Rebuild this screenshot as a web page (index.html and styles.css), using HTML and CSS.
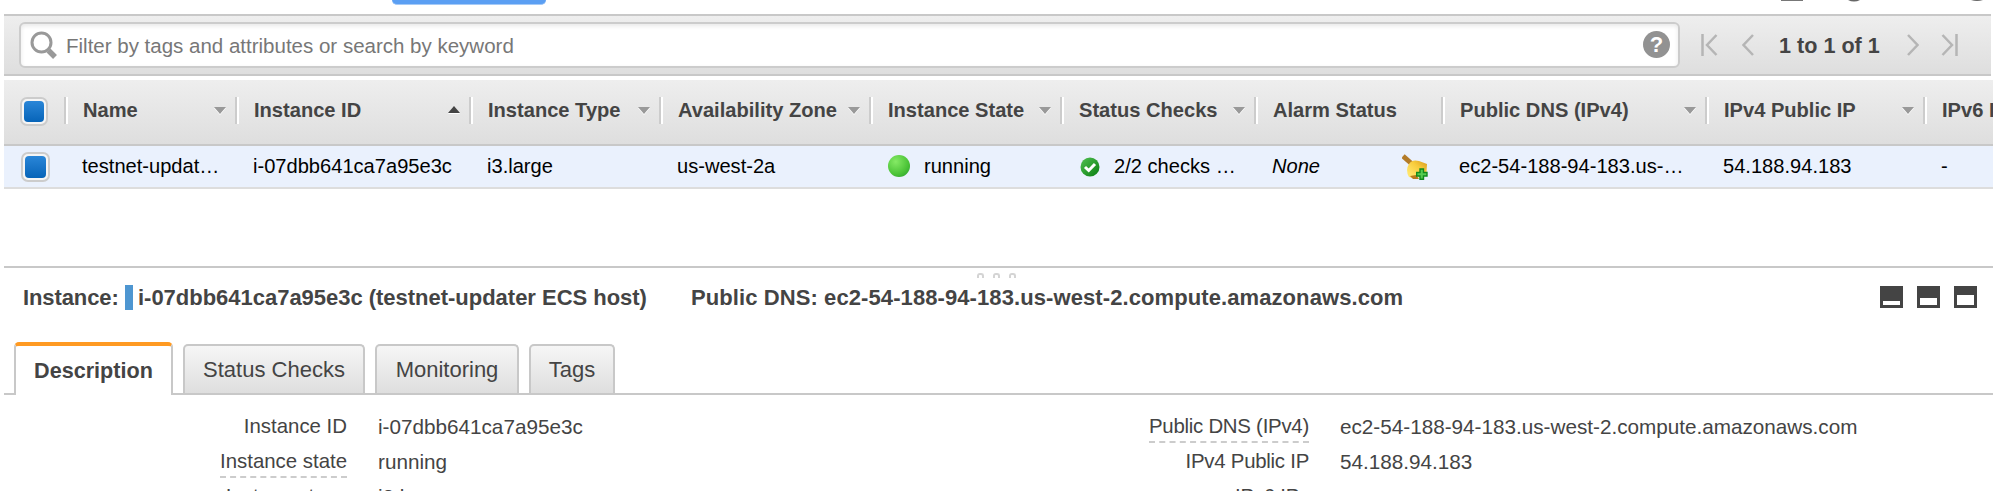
FILE: index.html
```html
<!DOCTYPE html>
<html lang="en">
<head>
<meta charset="utf-8">
<title>Instances</title>
<link rel="stylesheet" href="styles.css">
</head>
<body>
<div class="page">
  <header class="actions">
    <div class="action-button"></div>
    <svg class="action-icons" width="220" height="6" viewBox="0 0 220 6"><path d="M2 0H24V1H2Z" fill="#777"/><path d="M69 0Q75 3 81 0Z" fill="#666"/><path d="M192 0Q198 2 204 0Z" fill="#666"/></svg>
  </header>
  <div class="toolbar">
    <div class="search">
      <svg class="lens" width="28" height="30" viewBox="0 0 28 30"><circle cx="11.5" cy="11.5" r="9.5" fill="none" stroke="#999" stroke-width="3"/><path d="M18.5 19.5L25 26" stroke="#999" stroke-width="5.5"/></svg>
      <span class="placeholder">Filter by tags and attributes or search by keyword</span>
      <span class="help">?</span>
    </div>
    <div class="pager">
      <svg width="17" height="22" viewBox="0 0 17 22"><path d="M1.5 0V22M15.5 1L6 11L15.5 21"/></svg>
      <svg width="12" height="22" viewBox="0 0 12 22"><path d="M11 1L1.5 11L11 21"/></svg>
      <span class="pages">1 to 1 of 1</span>
      <svg width="12" height="22" viewBox="0 0 12 22"><path d="M1 1L10.5 11L1 21"/></svg>
      <svg width="17" height="22" viewBox="0 0 17 22"><path d="M15.5 0V22M1.500 1L11 11L1.500 21"/></svg>
    </div>
  </div>
  <div class="grid head">
    <div class="check-cell"><span class="check"></span></div>
    <div class="th">Name<i class="down"></i></div>
    <div class="th">Instance ID<i class="up"></i></div>
    <div class="th">Instance Type<i class="down"></i></div>
    <div class="th">Availability Zone<i class="down"></i></div>
    <div class="th">Instance State<i class="down"></i></div>
    <div class="th">Status Checks<i class="down"></i></div>
    <div class="th">Alarm Status</div>
    <div class="th">Public DNS (IPv4)<i class="down"></i></div>
    <div class="th">IPv4 Public IP<i class="down"></i></div>
    <div class="th">IPv6 IPs</div>
  </div>
  <div class="grid row">
    <div class="check-cell"><span class="check"></span></div>
    <div class="td">testnet-updat…</div>
    <div class="td">i-07dbb641ca7a95e3c</div>
    <div class="td">i3.large</div>
    <div class="td">us-west-2a</div>
    <div class="td"><span class="dot"></span>running</div>
    <div class="td"><svg class="ok" width="20" height="20" viewBox="0 0 20 20"><defs><linearGradient id="g" x1="0" y1="0" x2="1" y2="1"><stop offset="0" stop-color="#52c152"/><stop offset="1" stop-color="#087d10"/></linearGradient></defs><circle cx="10" cy="10" r="9.5" fill="url(#g)"/><path d="M5 10L8.7 13.5L15 7" fill="none" stroke="#fff" stroke-width="3"/></svg>2/2 checks …</div>
    <div class="td none">None<svg class="bell" width="26" height="26" viewBox="0 0 26 26"><defs><linearGradient id="b" x1="0" y1="1" x2="1" y2="0"><stop offset="0.2" stop-color="#ffe56a"/><stop offset="0.6" stop-color="#f8cc3c"/><stop offset="1" stop-color="#d89a20"/></linearGradient></defs><path d="M1 2L10 10" stroke="#b37b28" stroke-width="5"/><path d="M7 10Q10 5 17 7L25 10L24.500 18L14 25L7 23Q3 16 7 10Z" fill="url(#b)"/><path d="M8 22L11 25H17L14 21Z" fill="#b87a1c"/><path d="M18 15H21.500V18.500H25V22H21.500V25.300H18V22H14.700V18.500H18Z" fill="#56cc50" stroke="#128a1c" stroke-width="1.400"/></svg></div>
    <div class="td">ec2-54-188-94-183.us-…</div>
    <div class="td">54.188.94.183</div>
    <div class="td">-</div>
  </div>
  <section class="detail">
    <div class="grip"><i></i><i></i><i></i></div>
    <div class="title">
      <span class="t-label">Instance:</span><span class="bar"></span><span class="t-id">i-07dbb641ca7a95e3c (testnet-updater ECS host)</span><span class="t-dns">Public DNS: ec2-54-188-94-183.us-west-2.compute.amazonaws.com</span>
      <div class="panes"><i class="pane low"></i><i class="pane mid"></i><i class="pane high"></i></div>
    </div>
    <nav class="tabs">
      <div class="tab active">Description</div>
      <div class="tab status">Status Checks</div>
      <div class="tab monitor">Monitoring</div>
      <div class="tab tags">Tags</div>
    </nav>
    <div class="facts">
      <div class="label"><span>Instance ID</span></div><div>i-07dbb641ca7a95e3c</div>
      <div class="label"><span class="hint">Public DNS (IPv4)</span></div><div>ec2-54-188-94-183.us-west-2.compute.amazonaws.com</div>
      <div class="label"><span class="hint">Instance state</span></div><div>running</div>
      <div class="label"><span>IPv4 Public IP</span></div><div>54.188.94.183</div>
      <div class="label"><span class="hint">Instance type</span></div><div>i3.large</div>
      <div class="label"><span>IPv6 IPs</span></div><div>-</div>
    </div>
  </section>
</div>
</body>
</html>
```
FILE: styles.css
```css
* { box-sizing: border-box; }
body { margin: 0; background: #fff; color: #444; font-family: "Liberation Sans", Arial, sans-serif; font-size: 20.1px; }
.page { width: 1999px; height: 491px; padding-left: 4px; overflow: hidden; }
.actions { height: 14px; display: flex; justify-content: space-between; align-items: flex-start; padding-left: 388px; }
.action-button { width: 154px; height: 5px; background: #5b9ff3; border-bottom: 1px solid #a5caf7; border-radius: 0 0 6px 6px; }
.toolbar { width: 1987px; height: 62px; display: flex; align-items: center; padding: 0 28px 0 15px; border-top: 2px solid #c8c8c8; border-bottom: 2px solid #c8c8c8; background: linear-gradient(#eee, #dedede); }
.search { flex: none; width: 1661px; height: 46px; margin-top: -1px; display: flex; align-items: center; padding: 0 8px 0 9px; background: #fff; border: 2px solid #ccc; border-radius: 6px; box-shadow: inset 0 2px 4px #e8e8e8; }
.lens { margin-top: 3px; }
.placeholder { flex: 1; margin: 2px 0 0 8px; color: #777; font-size: 20.5px; white-space: nowrap; }
.help { width: 27px; height: 27px; border-radius: 50%; background: #929292; color: #fff; font-weight: bold; font-size: 22px; line-height: 28px; text-align: center; }
.pager { flex: none; display: flex; align-items: center; margin-left: 21px; }
.pager svg { flex: none; fill: none; stroke: #b5b5b5; stroke-width: 2.5; }
.pager svg:nth-of-type(2) { margin-left: 24px; }
.pages { width: 102px; margin: 1px 26px 0 25px; font-weight: bold; font-size: 21.6px; white-space: nowrap; }
.pager svg:nth-of-type(4) { margin-left: 22px; }
.grid { width: 1989px; display: grid; grid-template-columns: 61px 171px 234px 190px 210px 191px 194px 187px 264px 218px 69px; white-space: nowrap; overflow: hidden; }
.head { margin-top: 4px; height: 66px; background: linear-gradient(#eee, #dedede); border-bottom: 2px solid #c8c8c8; font-weight: bold; padding-top: 17px; align-items: start; }
.th { position: relative; height: 27px; display: flex; align-items: center; padding-left: 17px; border-left: 2px solid #ccc; box-shadow: inset 2px 0 #fff; }
.th { margin-left: -1px; }
.th i { position: absolute; right: 10px; top: 10px; border-left: 6px solid transparent; border-right: 6px solid transparent; }
.down { border-top: 7px solid #999; filter: drop-shadow(0 1px #fff); }
.th .up { top: 9px; border-bottom: 7px solid #444; filter: drop-shadow(0 1px #fff); }
.row { height: 43px; background: #eaf1fd; border-bottom: 2px solid #ddd; color: #000; }
.td { display: flex; align-items: center; padding-left: 17px; }
.check-cell { display: flex; align-items: center; padding-left: 16px; }
.check { width: 28px; height: 29px; border: 2px solid #ccc; border-radius: 7px; background: #f5f5f5; padding: 2px; display: flex; }
.check::before { content: ""; flex: 1; border-radius: 4px; background: linear-gradient(#2a86d8, #0764b8); }
.row .check { margin-left: 1px; width: 29px; height: 30px; }
.dot { width: 22px; height: 22px; border-radius: 50%; margin: -2px 14px 0 1px; background: radial-gradient(circle at 35% 30%, #85ea65, #4bc337 60%, #22982b); }
.ok { margin: 0 14px 0 2px; }
.none { font-style: italic; }
.bell { margin-left: 82px; }
.detail { width: 1989px; margin-top: 77px; border-top: 2px solid #c8c8c8; }
.grip { height: 16px; display: flex; justify-content: center; gap: 9px; padding: 5px 4px 0 0; }
.grip i { width: 7px; height: 5px; border: 2px solid #d4d4d4; border-bottom: 0; border-radius: 3px 3px 0 0; }
.title { height: 26px; display: flex; align-items: center; font-weight: bold; font-size: 22px; padding-left: 19px; white-space: nowrap; }
.title > span:not(.bar) { padding-top: 1px; }
.t-label { width: 102px; letter-spacing: -0.1px; }
.bar { width: 8px; height: 25px; background: #4e96d1; margin-right: 5px; }
.t-id { width: 553px; letter-spacing: -0.02px; }
.t-dns { letter-spacing: 0.09px; }
.panes { display: flex; gap: 14px; margin: 0 16px 0 auto; }
.pane { width: 23px; height: 22px; border: solid #444; background: #fff; }
.low { border-width: 15px 3px 3px; }
.mid { border-width: 12px 3px 3px; }
.high { border-width: 9px 3px 3px; }
.tabs { height: 85px; display: flex; align-items: flex-end; gap: 10px; padding-left: 10px; border-bottom: 2px solid #c8c8c8; font-size: 22px; }
.tab { height: 49px; display: flex; align-items: center; justify-content: center; border: 2px solid #c8c8c8; border-bottom: 0; border-radius: 5px 5px 0 0; background: linear-gradient(#f6f6f6, #dedede); }
.active { width: 159px; height: 53px; margin-bottom: -2px; padding-bottom: 0; background: #fff; border-top: 4px solid #ff9a22; font-weight: bold; font-size: 21.6px; }
.status { width: 182px; }
.monitor { width: 144px; }
.tags { width: 86px; }
.facts { display: grid; grid-template-columns: 343px 585px 377px 1fr; grid-auto-rows: 35px; padding-top: 14px; font-size: 20.7px; white-space: nowrap; }
.facts > div { line-height: 35px; padding-left: 31px; }
.facts > .label { text-align: right; padding-left: 0; font-size: 20.4px; }
.label:nth-child(4n + 3) { letter-spacing: -0.25px; }
.hint { display: inline-block; vertical-align: top; height: 34px; border-bottom: 2px dashed #ccc; }
```
